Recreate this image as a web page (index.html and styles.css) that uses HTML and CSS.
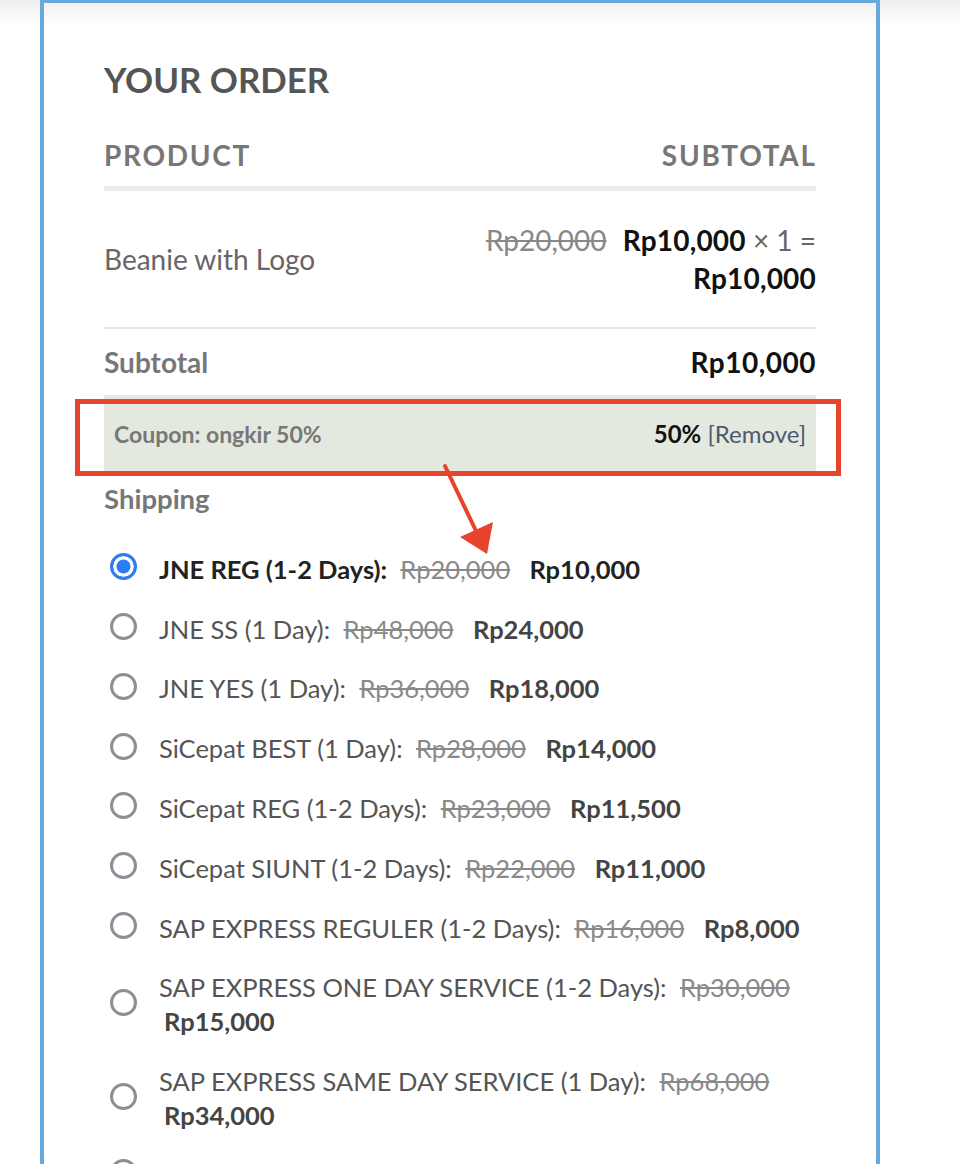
FILE: index.html
```html
<!DOCTYPE html>
<html lang="en">
<head>
<meta charset="utf-8">
<title>Your order</title>
<link rel="stylesheet" href="styles.css">
</head>
<body>
<div class="order-box">
  <h3 class="order-title">YOUR ORDER</h3>
  <div class="order-head"><span>PRODUCT</span><span>SUBTOTAL</span></div>

  <div class="row item-row">
    <div class="item-name">Beanie with Logo</div>
    <div class="item-price"><del>Rp20,000</del> <strong>Rp10,000</strong> <span class="qty">× 1 =</span> <strong>Rp10,000</strong></div>
  </div>

  <div class="row subtotal-row">
    <div class="row-label">Subtotal</div>
    <div class="row-value">Rp10,000</div>
  </div>

  <div class="coupon-row">
    <div class="coupon-label">Coupon: ongkir 50%</div>
    <div class="coupon-value"><strong>50%</strong> <a class="remove-link">[Remove]</a></div>
  </div>

  <div class="shipping-title">Shipping</div>

  <ul class="ship-list">
    <li class="ship-item selected"><span class="radio"></span><span class="ship-label">JNE REG (1-2 Days): <del>Rp20,000</del> <ins>Rp10,000</ins></span></li>
    <li class="ship-item"><span class="radio"></span><span class="ship-label">JNE SS (1 Day): <del>Rp48,000</del> <ins>Rp24,000</ins></span></li>
    <li class="ship-item"><span class="radio"></span><span class="ship-label">JNE YES (1 Day): <del>Rp36,000</del> <ins>Rp18,000</ins></span></li>
    <li class="ship-item"><span class="radio"></span><span class="ship-label">SiCepat BEST (1 Day): <del>Rp28,000</del> <ins>Rp14,000</ins></span></li>
    <li class="ship-item"><span class="radio"></span><span class="ship-label">SiCepat REG (1-2 Days): <del>Rp23,000</del> <ins>Rp11,500</ins></span></li>
    <li class="ship-item"><span class="radio"></span><span class="ship-label">SiCepat SIUNT (1-2 Days): <del>Rp22,000</del> <ins>Rp11,000</ins></span></li>
    <li class="ship-item"><span class="radio"></span><span class="ship-label">SAP EXPRESS REGULER (1-2 Days): <del>Rp16,000</del> <ins>Rp8,000</ins></span></li>
    <li class="ship-item"><span class="radio"></span><span class="ship-label">SAP EXPRESS ONE DAY SERVICE (1-2 Days): <del>Rp30,000</del> <ins>Rp15,000</ins></span></li>
    <li class="ship-item"><span class="radio"></span><span class="ship-label">SAP EXPRESS SAME DAY SERVICE (1 Day): <del>Rp68,000</del> <ins>Rp34,000</ins></span></li>
    <li class="ship-item"><span class="radio"></span><span class="ship-label">SAP EXPRESS CARGO (2-3 Days): <del>Rp12,000</del> <ins>Rp6,000</ins></span></li>
  </ul>
</div>

<svg class="annotation" width="960" height="1164" viewBox="0 0 960 1164" aria-hidden="true">
  <rect x="77.5" y="401.5" width="761" height="72" fill="none" stroke="#e8432c" stroke-width="5"/>
  <line x1="445" y1="466" x2="477" y2="533" stroke="#e8432c" stroke-width="4" stroke-linecap="round"/>
  <polygon points="487,554 460,537 493,522" fill="#e8432c"/>
</svg>
</body>
</html>
```

FILE: styles.css
```css
* {
  box-sizing: border-box;
}

html,
body {
  margin: 0;
  padding: 0;
}

body {
  position: relative;
  min-height: 1164px;
  overflow: hidden;
  font-family: Lato, "Noto Sans", sans-serif;
  background: linear-gradient(#ededed, #ffffff 24px) no-repeat, #ffffff;
}

.order-box {
  margin-left: 40px;
  width: 840px;
  min-height: 1240px;
  border: 4px solid #66aadc;
  border-top-width: 3px;
  border-bottom: none;
  background: linear-gradient(#f1f1f1, #ffffff 24px) no-repeat, #ffffff;
  padding: 55px 60px 0 60px;
}

.order-title {
  margin: 0;
  font-size: 34.8px;
  line-height: 43.2px;
  font-weight: 700;
  color: #555555;
}

.order-head {
  margin-top: 38px;
  display: flex;
  justify-content: space-between;
  font-size: 28px;
  line-height: 33.6px;
  font-weight: 700;
  letter-spacing: 1.7px;
  color: #777777;
  padding-bottom: 13px;
  border-bottom: 5px solid #ebebeb;
}

.order-head span:last-child {
  margin-right: -0.7px;
}

.row {
  display: flex;
  justify-content: space-between;
  align-items: center;
  font-size: 28px;
  line-height: 38px;
  border-bottom: 2px solid #e9e9e9;
}

.item-row {
  padding: 30px 0;
}

.item-name {
  color: #666666;
}

.item-price {
  max-width: 360px;
  text-align: right;
  color: #666666;
}

.item-price del {
  color: #888888;
  margin-right: 9px;
}

.item-price strong {
  color: #111111;
  font-weight: 700;
  letter-spacing: 0.2px;
}

.subtotal-row {
  padding: 14px 0;
}

.row-label {
  font-weight: 700;
  color: #777777;
}

.row-value {
  font-weight: 700;
  color: #111111;
  letter-spacing: 0.5px;
}

.coupon-row {
  display: flex;
  justify-content: space-between;
  align-items: center;
  background: #e3e9df;
  padding: 22px 10px 22px 10px;
  font-size: 23px;
  line-height: 30px;
}

.coupon-label {
  font-weight: 700;
  color: #777777;
}

.coupon-value {
  font-size: 24px;
}

.coupon-value strong {
  color: #111111;
  font-weight: 700;
}

.remove-link {
  color: #4b5a70;
}

.shipping-title {
  margin-top: 9px;
  font-size: 27.5px;
  line-height: 38px;
  font-weight: 700;
  color: #777777;
}

.ship-list {
  list-style: none;
  margin: 34px 0 0 0;
  padding: 0 0 0 6px;
}

.ship-item {
  display: flex;
  align-items: center;
  gap: 22px;
  margin-bottom: 25.8px;
  font-size: 25.5px;
  line-height: 34px;
  color: #555555;
}

.radio {
  flex-shrink: 0;
  width: 27px;
  height: 27px;
  margin-bottom: 4px;
  border: 3px solid #8e8e97;
  border-radius: 50%;
  background: #ffffff;
}

.ship-item.selected .radio {
  border-color: #2f7bf5;
  background: #2f7bf5;
  box-shadow: inset 0 0 0 3.5px #ffffff;
}

.ship-label {
  flex: 1;
}

.ship-item.selected .ship-label {
  font-weight: 700;
  color: #222222;
}

.ship-label del {
  font-weight: 400;
  color: #8a8a8a;
  margin-left: 7px;
  margin-right: 8px;
}

.ship-label ins {
  text-decoration: none;
  font-weight: 700;
  color: #444444;
  margin-left: 5px;
}

.ship-item.selected .ship-label ins {
  color: #222222;
}

.annotation {
  position: absolute;
  left: 0;
  top: 0;
  pointer-events: none;
}
```
